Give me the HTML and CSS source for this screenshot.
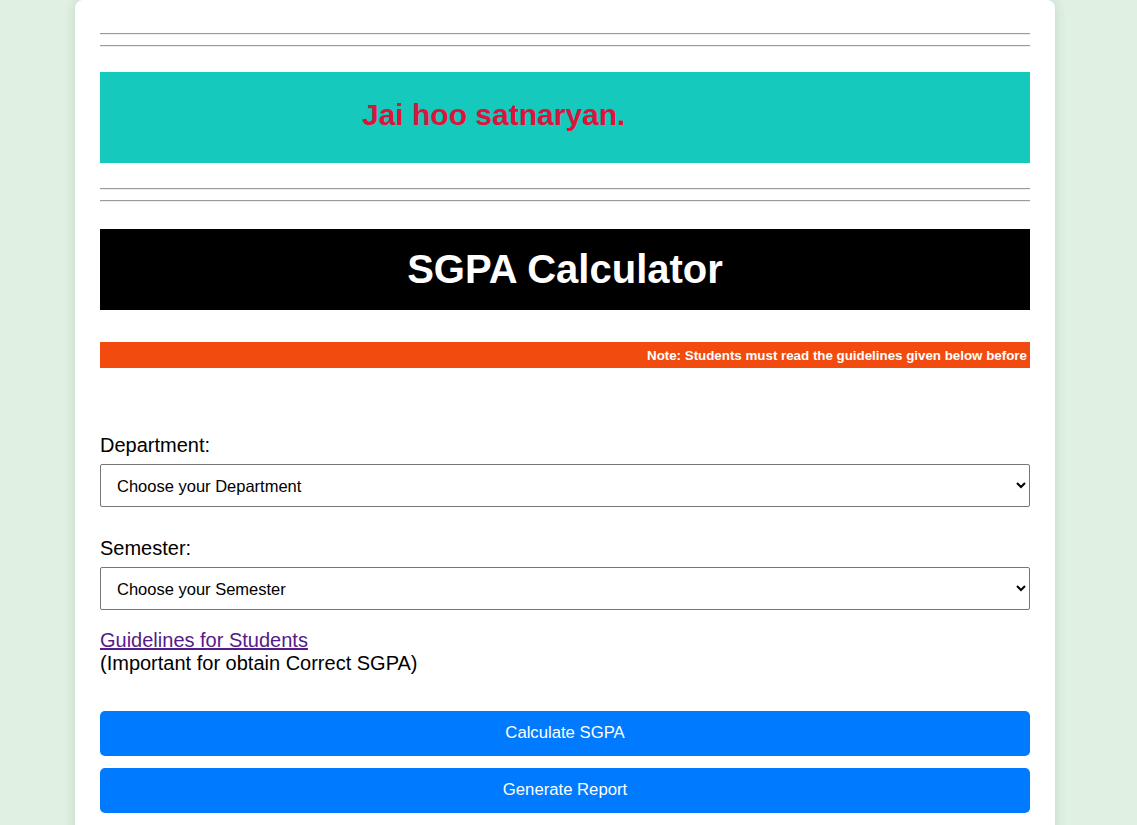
FILE: index.html
```html
<!DOCTYPE html>
<html lang="en">
<head>
  <meta charset="UTF-8">
  <title>SGPA Calculator</title>
  <link rel="stylesheet" href="styles.css">
</head>
<body>
  <div class="container">
    <hr>
    <hr>
    <div class="banner">
      <span class="banner-text">Jai hoo satnaryan.</span>
    </div>
    <hr>
    <hr>
    <h1 class="title">SGPA Calculator</h1>
    <div class="note">
      <span class="note-text">Note: Students must read the guidelines given below before</span>
    </div>

    <form class="form">
      <label for="department">Department:</label>
      <select id="department" name="department">
        <option>Choose your Department</option>
      </select>

      <label for="semester">Semester:</label>
      <select id="semester" name="semester">
        <option>Choose your Semester</option>
      </select>

      <div class="guide">
        <a href="#guidelines">Guidelines for Students</a><br>
        (Important for obtain Correct SGPA)
      </div>

      <button type="button" class="button">Calculate SGPA</button>
      <button type="button" class="button">Generate Report</button>
    </form>
  </div>
</body>
</html>
```

FILE: styles.css
```css
html,body{margin: 0;}
body{
  background: #e0f0e2;
  font-family: "Liberation Sans", Arial, sans-serif;
  color: #000;
}
.container{
  width: 930px;
  margin-left: 75px;
  padding: 23px 25px 40px;
  background: #fff;
  border-radius: 8px;
  box-shadow: 0 0 12px rgba(60, 120, 60, 0.18);
  min-height: 900px;
}
hr{
  margin: 10px 0;
  border: 0;
  border-top: 1px solid #9a9a9a;
  border-bottom: 1px solid #eeeeee;
  height: 0;
}
.banner{
  margin-top: 25px;
  margin-bottom: 25px;
  height: 91px;
  background: #16c9bd;
  display: flex;
  align-items: center;
  padding-left: 262px;
  padding-bottom: 6px;
  box-sizing: border-box;
}
.banner-text{
  color: #dc143c;
  font-size: 30px;
  font-weight: bold;
}
.title{
  margin: 27px 0 0;
  height: 81px;
  background: #000;
  color: #fff;
  font-size: 40px;
  font-weight: bold;
  display: flex;
  align-items: center;
  justify-content: center;
}
.note{
  margin-top: 32px;
  height: 26px;
  background: #f24b10;
  overflow: hidden;
  white-space: nowrap;
  display: flex;
  align-items: center;
  padding-left: 547px;
}
.note-text{
  color: #fff;
  font-size: 13.33px;
  font-weight: bold;
}
.form{
  display: flex;
  flex-direction: column;
  padding-top: 66px;
}
.form label{
  font-size: 20px;
  line-height: 23px;
  margin-bottom: 7px;
}
.form select{
  height: 43px;
  padding: 0 12px;
  font-family: "Liberation Sans", Arial, sans-serif;
  font-size: 16.5px;
  color: #000;
  background: #fff;
  border: 1px solid #767676;
  border-radius: 2px;
  margin-bottom: 30px;
}
.form select + label + select{margin-bottom: 19px;}
.guide{
  font-size: 20px;
  line-height: 23px;
  margin-bottom: 36px;
}
.guide a{color: #551a8b;}
.button{
  height: 45px;
  margin-bottom: 12px;
  padding-bottom: 2px;
  border: 0;
  border-radius: 5px;
  background: #007bff;
  color: #fff;
  font-family: "Liberation Sans", Arial, sans-serif;
  font-size: 16.7px;
}
```
